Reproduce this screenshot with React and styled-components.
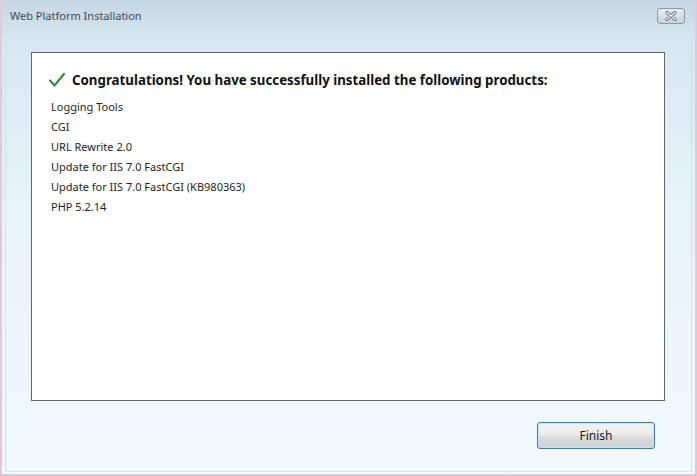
import React from 'react'
import styled, { createGlobalStyle } from 'styled-components'

const Global = createGlobalStyle`
  html, body { margin: 0; padding: 0; }
  body { font-family: "Noto Sans", "Open Sans", sans-serif; }
`

const products = [
  'Logging Tools',
  'CGI',
  'URL Rewrite 2.0',
  'Update for IIS 7.0 FastCGI',
  'Update for IIS 7.0 FastCGI (KB980363)',
  'PHP 5.2.14',
]

export default function App() {
  return (
    <>
      <Global />
      <Window>
        <TitleBar>
          <Title>Web Platform Installation</Title>
          <CloseButton aria-label="Close">
            <svg width="14" height="10" viewBox="0 0 14 10">
              <path d="M3 1.5 L11 8.5 M11 1.5 L3 8.5" stroke="#5b6670" strokeWidth="3" strokeLinecap="round" />
              <path d="M3 1.5 L11 8.5 M11 1.5 L3 8.5" stroke="#fff" strokeWidth="1.4" strokeLinecap="round" />
            </svg>
          </CloseButton>
        </TitleBar>
        <Client>
          <Panel>
            <Heading>
              <svg width="18" height="16" viewBox="0 0 18 16">
                <path d="M2 8.5 L6.5 13.5 L16 2" fill="none" stroke="#3d8b37" strokeWidth="2.2" strokeLinecap="round" strokeLinejoin="round" />
              </svg>
              <span>Congratulations! You have successfully installed the following products:</span>
            </Heading>
            <List>
              {products.map((p) => (
                <Item key={p}>{p}</Item>
              ))}
            </List>
          </Panel>
          <Footer>
            <Button>Finish</Button>
          </Footer>
        </Client>
      </Window>
    </>
  )
}

const Window = styled.div`
  width: 697px;
  height: 476px;
  box-sizing: border-box;
  display: flex;
  flex-direction: column;
  border: 2px solid #e9c6d6;
  border-top: none;
  background: linear-gradient(#c7d9e6 0px, #d6e7f1 40px, #e6f3f9 200px, #f1f9fc 476px);
`

const TitleBar = styled.div`
  height: 30px;
  display: flex;
  align-items: center;
  justify-content: space-between;
  padding: 0 10px 0 8px;
  background: linear-gradient(#c5d5e2, #d2e3ee);
`

const Title = styled.div`
  font-size: 11px;
  color: #3d4a55;
`

const CloseButton = styled.div`
  width: 26px;
  height: 14px;
  margin-top: 2px;
  border: 1px solid #8a98a6;
  border-radius: 3px;
  background: linear-gradient(#e4ecf2, #c5d3de);
  display: flex;
  align-items: center;
  justify-content: center;
`

const Client = styled.div`
  flex: 1;
  display: flex;
  flex-direction: column;
  padding: 22px 26px 0 25px;
  margin: 0 3px 2px;
  border-left: 1px solid #cfe2ec;
  border-right: 1px solid #cfe2ec;
  border-bottom: 1px solid #cfe2ec;
`

const Panel = styled.div`
  height: 349px;
  box-sizing: border-box;
  background: #fff;
  border: 1px solid #646464;
  padding: 17px 0 0 19px;
`

const Heading = styled.div`
  display: flex;
  align-items: center;
  gap: 6px;
  margin-left: -3px;
  font-weight: bold;
  font-size: 13.3px;
  color: #111;
  height: 20px;
`

const List = styled.div`
  margin-top: 7px;
  display: flex;
  flex-direction: column;
`

const Item = styled.div`
  font-size: 11px;
  line-height: 20px;
  color: #1e1e1e;
`

const Footer = styled.div`
  display: flex;
  justify-content: flex-end;
  padding-top: 21px;
  padding-right: 10px;
`

const Button = styled.div`
  width: 118px;
  height: 27px;
  box-sizing: border-box;
  border: 1px solid #3c7fb1;
  border-radius: 3px;
  box-shadow: inset 0 0 0 1px #c4e5f6;
  background: linear-gradient(#f2f2f2 0%, #ebebeb 48%, #dddddd 52%, #cfcfcf 100%);
  display: flex;
  align-items: center;
  justify-content: center;
  font-size: 12px;
  color: #1a1a1a;
`
